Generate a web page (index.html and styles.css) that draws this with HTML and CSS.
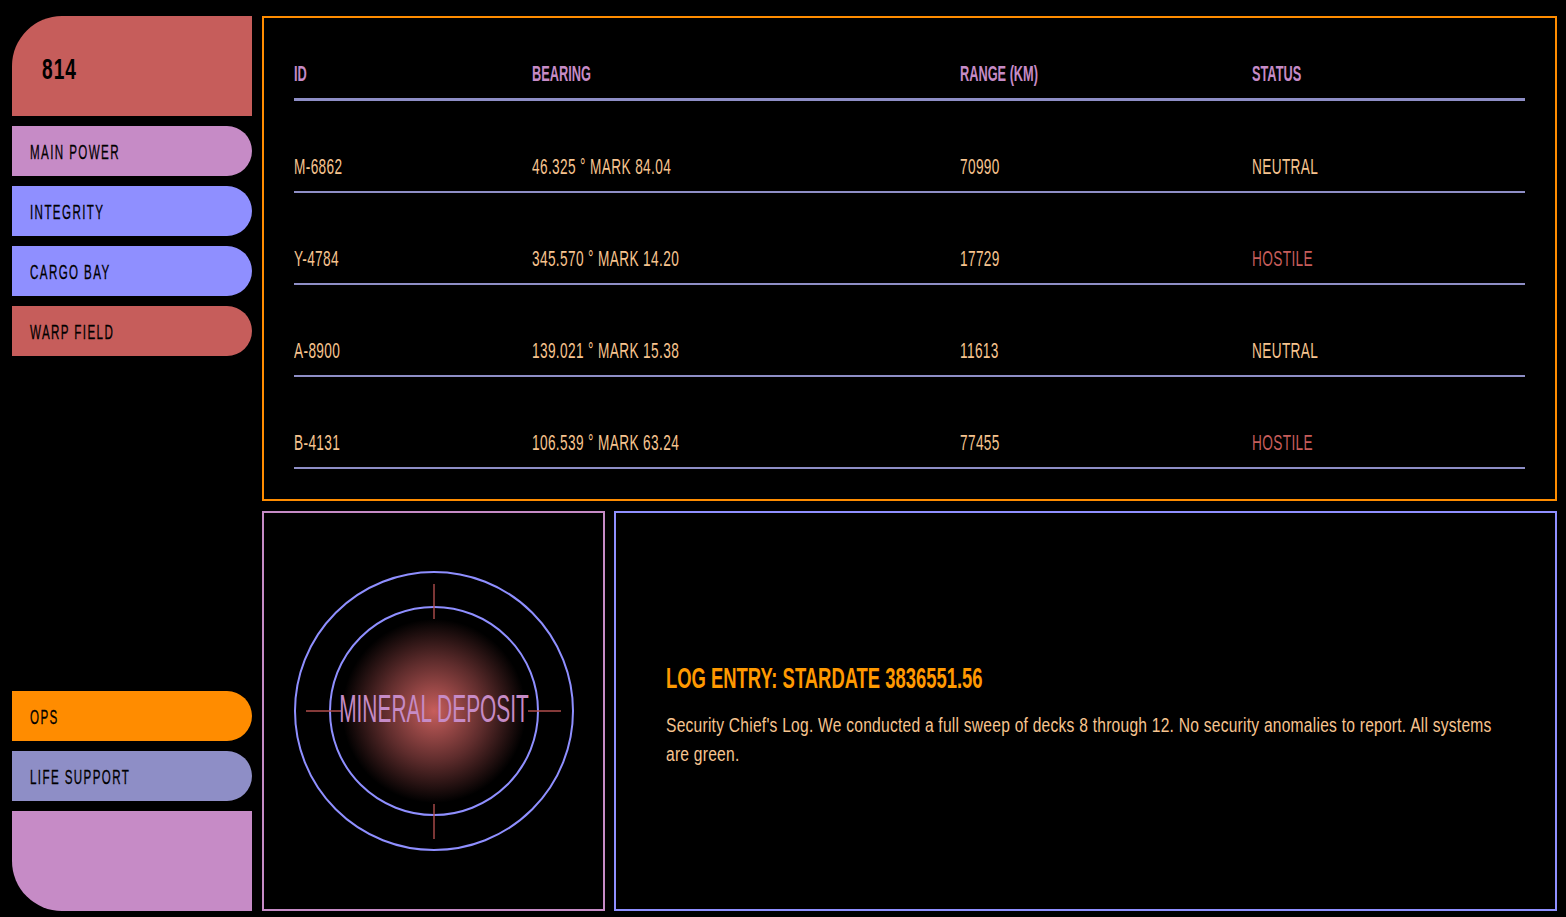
FILE: index.html
```html
<!DOCTYPE html>
<html lang="en">
<head>
<meta charset="utf-8">
<title>LCARS Sensor Console</title>
<link rel="stylesheet" href="styles.css">
</head>
<body>
<aside class="sidebar">
  <div class="cap cap-top"><span class="t num">814</span></div>
  <div class="btn c-lilac"><span class="t">MAIN POWER</span></div>
  <div class="btn c-blue"><span class="t">INTEGRITY</span></div>
  <div class="btn c-blue"><span class="t">CARGO BAY</span></div>
  <div class="btn c-red"><span class="t">WARP FIELD</span></div>
  <div class="spacer"></div>
  <div class="btn c-orange"><span class="t">OPS</span></div>
  <div class="btn c-slate"><span class="t">LIFE SUPPORT</span></div>
  <div class="cap cap-bottom"></div>
</aside>
<main class="main">
  <section class="panel sensors">
    <div class="grid">
      <div class="cell head"><span class="t">ID</span></div>
      <div class="cell head"><span class="t">BEARING</span></div>
      <div class="cell head"><span class="t">RANGE (KM)</span></div>
      <div class="cell head"><span class="t">STATUS</span></div>

      <div class="cell"><span class="t">M-6862</span></div>
      <div class="cell"><span class="t">46.325 ° MARK 84.04</span></div>
      <div class="cell"><span class="t">70990</span></div>
      <div class="cell"><span class="t">NEUTRAL</span></div>

      <div class="cell"><span class="t">Y-4784</span></div>
      <div class="cell"><span class="t">345.570 ° MARK 14.20</span></div>
      <div class="cell"><span class="t">17729</span></div>
      <div class="cell hostile"><span class="t">HOSTILE</span></div>

      <div class="cell"><span class="t">A-8900</span></div>
      <div class="cell"><span class="t">139.021 ° MARK 15.38</span></div>
      <div class="cell"><span class="t">11613</span></div>
      <div class="cell"><span class="t">NEUTRAL</span></div>

      <div class="cell"><span class="t">B-4131</span></div>
      <div class="cell"><span class="t">106.539 ° MARK 63.24</span></div>
      <div class="cell"><span class="t">77455</span></div>
      <div class="cell hostile"><span class="t">HOSTILE</span></div>
    </div>
  </section>
  <div class="lower">
    <section class="panel scan">
      <svg class="scope" width="300" height="300" viewBox="0 0 300 300">
        <defs>
          <radialGradient id="glow" cx="150" cy="150" r="92" gradientUnits="userSpaceOnUse">
            <stop offset="0" stop-color="#c75e5c"/>
            <stop offset="0.55" stop-color="#5e2c2c"/>
            <stop offset="1" stop-color="#000"/>
          </radialGradient>
        </defs>
        <circle cx="150" cy="150" r="92" fill="url(#glow)"/>
        <circle cx="150" cy="150" r="139" fill="none" stroke="#8f8fff" stroke-width="2"/>
        <circle cx="150" cy="150" r="104" fill="none" stroke="#8f8fff" stroke-width="2"/>
        <g stroke="#b04e4d" stroke-width="1.4">
          <line x1="150" y1="23" x2="150" y2="58"/>
          <line x1="150" y1="243" x2="150" y2="278"/>
          <line x1="22" y1="150" x2="57" y2="150"/>
          <line x1="244" y1="150" x2="277" y2="150"/>
        </g>
      </svg>
      <span class="scan-label">MINERAL DEPOSIT</span>
    </section>
    <section class="panel log">
      <h2 class="log-title"><span class="t">LOG ENTRY: STARDATE 3836551.56</span></h2>
      <p class="log-body">Security Chief's Log. We conducted a full sweep of decks 8 through 12. No security anomalies to report. All systems are green.</p>
    </section>
  </div>
</main>
</body>
</html>
```

FILE: styles.css
```css
* { box-sizing: border-box; }

html, body { margin: 0; }

body {
  background: #000;
  height: 917px;
  padding: 16px 9px 6px 12px;
  display: flex;
  gap: 10px;
  overflow: hidden;
  font-family: "Liberation Sans Narrow", "Liberation Sans", Arial, sans-serif;
  --sx: 0.62;
}

.t {
  display: inline-block;
  white-space: nowrap;
  transform: scaleX(var(--sx));
  transform-origin: left center;
}

/* ---------- sidebar ---------- */
.sidebar {
  width: 240px;
  flex: none;
  display: flex;
  flex-direction: column;
  gap: 10px;
}

.cap {
  height: 100px;
  flex: none;
}
.cap-top {
  background: #c65d5b;
  border-radius: 50px 0 0 0;
  display: flex;
  align-items: center;
  padding: 6px 0 0 30px;
  --sx: 0.66;
}
.cap-bottom {
  background: #c68bc6;
  border-radius: 0 0 0 50px;
}
.num {
  font-size: 29px;
  font-weight: bold;
  color: #000;
  letter-spacing: 1.5px;
}

.btn {
  height: 50px;
  flex: none;
  border-radius: 0 25px 25px 0;
  display: flex;
  align-items: center;
  padding: 2px 0 0 18px;
  font-size: 20px;
  color: #000;
  letter-spacing: 2.4px;
  -webkit-text-stroke: 0.3px #000;
  --sx: 0.58;
}
.c-lilac { background: #c68bc6; }
.c-blue { background: #8f8fff; }
.c-red { background: #c65d5b; }
.c-orange { background: #ff8c00; }
.c-slate { background: #8e8ec6; }

.spacer { flex: 1; }

/* ---------- main ---------- */
.main {
  flex: 1;
  display: flex;
  flex-direction: column;
  gap: 10px;
  min-width: 0;
}

.panel {
  border: 2px solid;
  min-width: 0;
}

.sensors {
  height: 485px;
  flex: none;
  border-color: #ff8c00;
  padding: 32px 30px 30px 30px;
}

.grid {
  display: grid;
  grid-template-columns: 238px 428px 292px 1fr;
}

.cell {
  height: 92px;
  display: flex;
  align-items: flex-end;
  padding-bottom: 11px;
  border-bottom: 2px solid #8e8ec6;
  font-size: 22px;
  line-height: 26px;
  color: #f7c48f;
  letter-spacing: 0.6px;
}
.cell.head {
  height: 51px;
  border-bottom-width: 3px;
  color: #c68bc6;
  font-weight: bold;
  letter-spacing: 0;
  padding-bottom: 11px;
  --sx: 0.58;
}
.cell.hostile { color: #c65d5b; }

.lower {
  flex: 1;
  display: grid;
  grid-template-columns: 343px minmax(0, 1fr);
  gap: 9px;
}

.scan {
  border-color: #c68bc6;
  position: relative;
  display: flex;
  align-items: center;
  justify-content: center;
}
.scope { display: block; }

.scan-label {
  position: absolute;
  left: 50%;
  top: 50%;
  transform: translate(-50%, -56%) scaleX(0.55);
  font-size: 38px;
  color: #c68bc6;
  white-space: nowrap;
  line-height: 1;
}

.log {
  border-color: #8f8fff;
  display: flex;
  flex-direction: column;
  justify-content: center;
  padding: 8px 0 0 50px;
  overflow: hidden;
}

.log-title {
  margin: 0 0 16px;
  font-size: 29px;
  line-height: 34px;
  font-weight: bold;
  color: #ff9900;
  --sx: 0.635;
}

.log-body {
  margin: 0;
  width: 1064px;
  transform: scaleX(0.78);
  transform-origin: left top;
  font-size: 20px;
  line-height: 29px;
  color: #f7c48f;
  letter-spacing: 0.3px;
}
```
